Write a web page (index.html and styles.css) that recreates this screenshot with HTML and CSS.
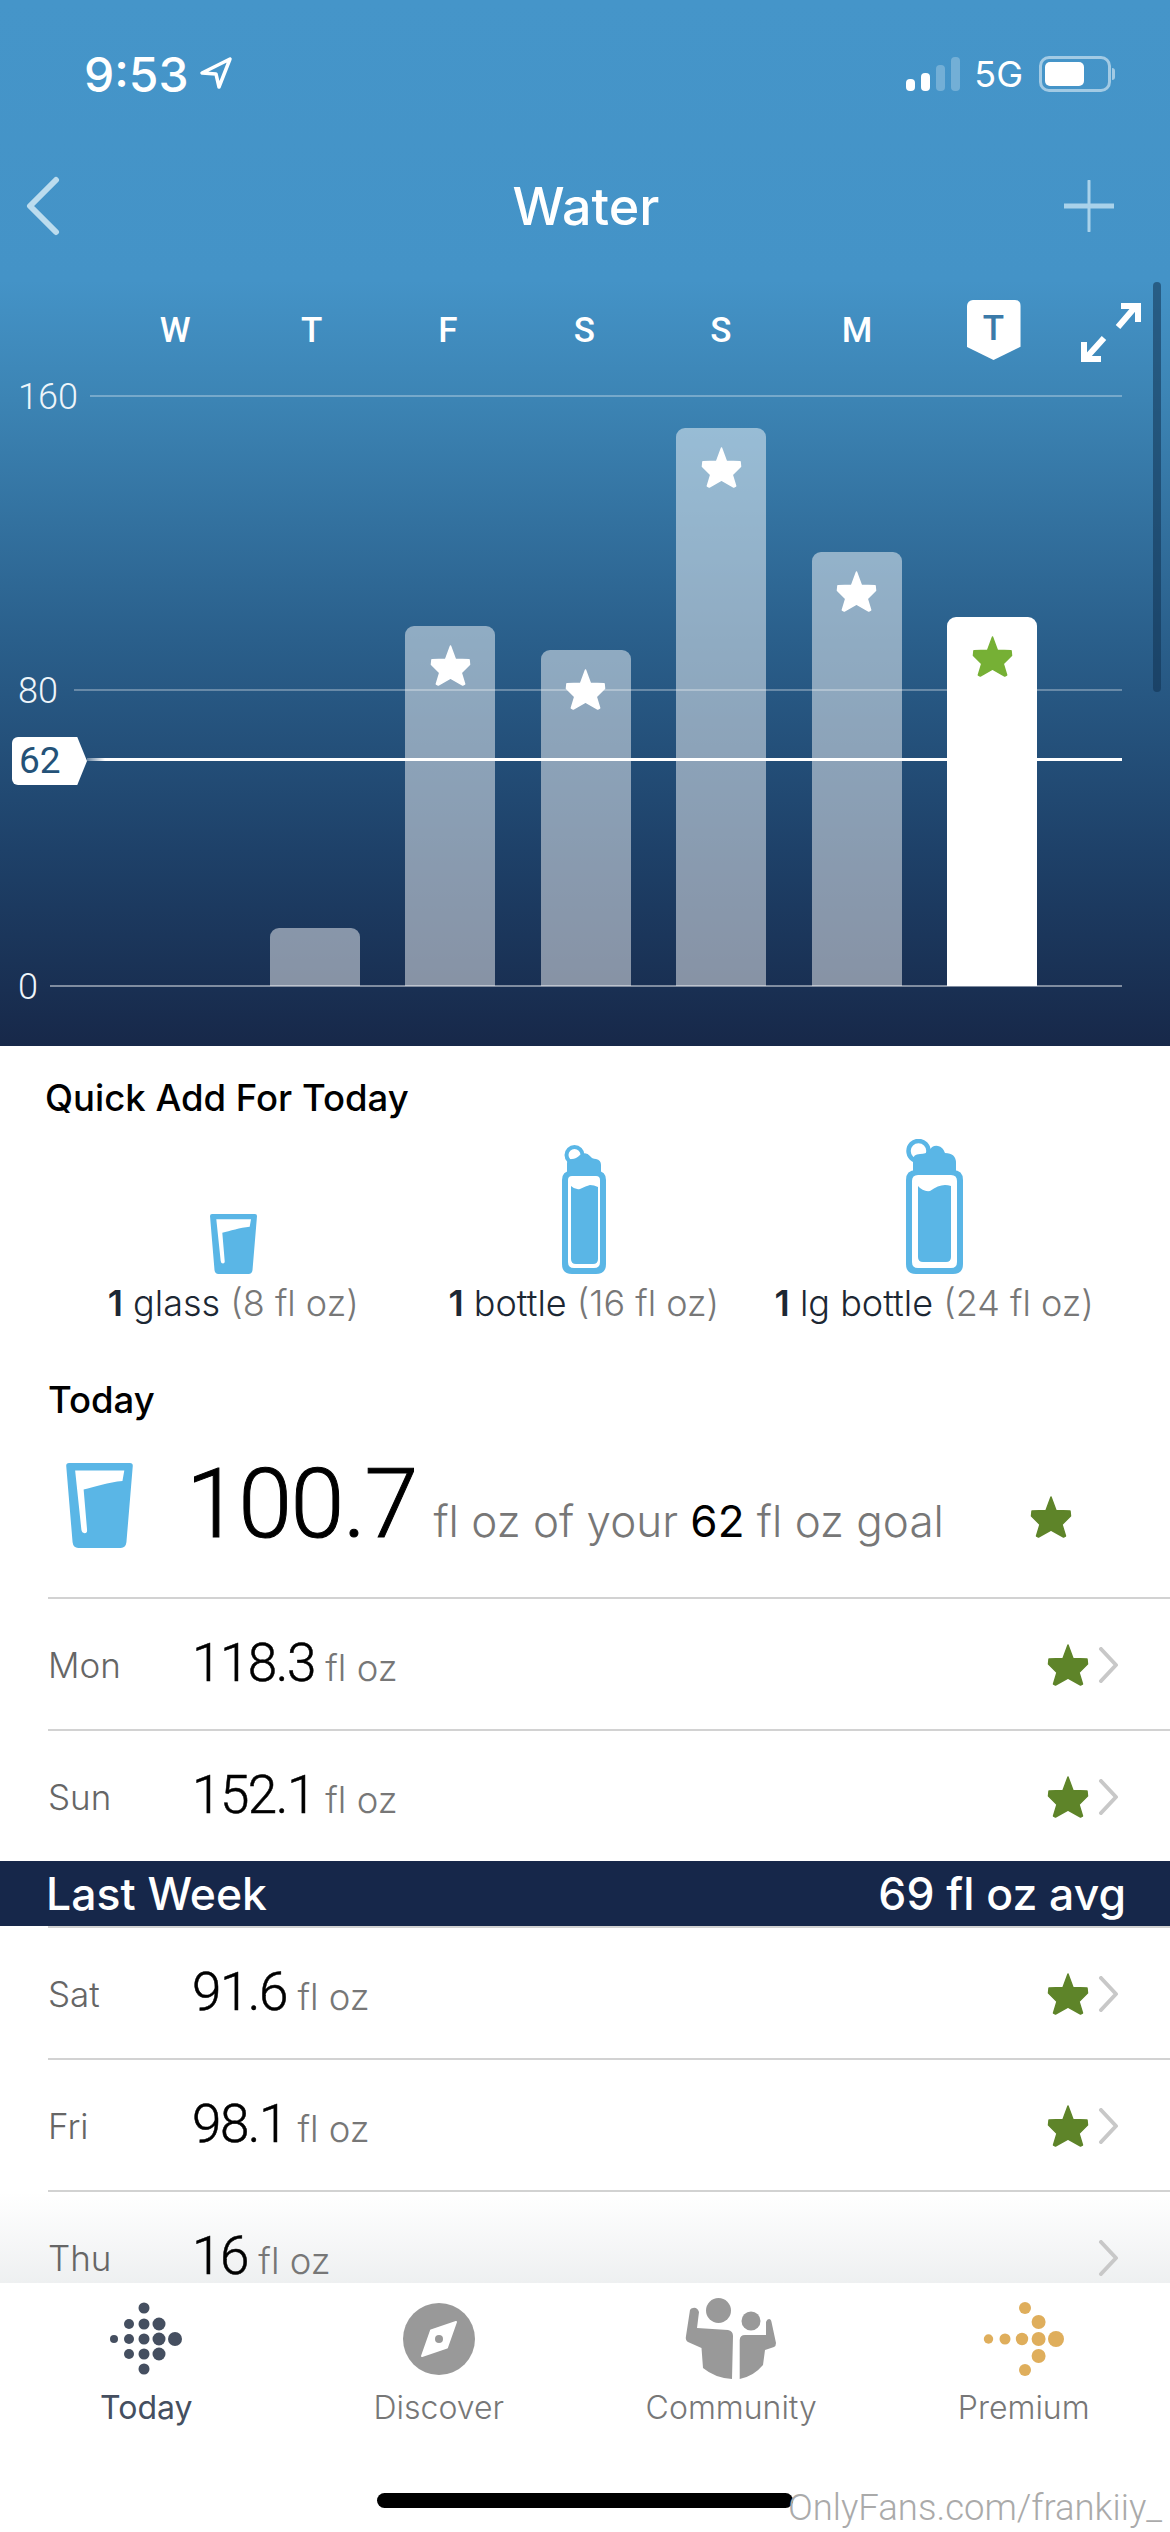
FILE: index.html
```html
<!DOCTYPE html>
<html lang="en">
<head>
  <meta charset="UTF-8">
  <title>Water</title>
  <link rel="stylesheet" href="styles.css">
</head>
<body>
  <svg class="defs" width="0" height="0">
    <symbol id="star" viewBox="0 0 44 44">
      <path d="M22 2 L27 15.5 L41 16 L41.5 21 L33 29.5 L36.5 41 L34.5 42 L22 35 L9.500 42 L7.500 41 L11 29.500 L2.500 21 L3 16 L17 15.500 Z" stroke-linejoin="round" stroke-width="1.500" stroke="currentColor" fill="currentColor"/>
    </symbol>
    <symbol id="chev" viewBox="0 0 21 36">
      <path d="M3 2 L18 18 L3 34" fill="none" stroke="currentColor" stroke-width="4" stroke-linecap="round" stroke-linejoin="round"/>
    </symbol>
    <symbol id="glass" viewBox="0 0 47 60">
      <path fill="#5ab6e6" fill-rule="evenodd" d="M2 0 H45 Q47 0 47 2 L42.500 56 Q42 60 38.500 60 H8.500 Q5 60 4.500 56 L0 2 Q0 0 2 0 Z M6.300 5.300 L10.700 47 Q11 49.500 13 49.500 Q15 49.500 14.700 47 L12.300 18.700 C20 17 30 13.500 39.700 12.700 L41 5.300 Z"/>
    </symbol>
  </svg>

  <div class="screen">
    <section class="hero">
      <div class="status">
        <span class="clock">9:53</span>
        <svg class="loc" width="34" height="34" viewBox="0 0 34 34"><path d="M31 3 L3 17 L17 18 L20 31 Z" fill="none" stroke="#fff" stroke-width="3.500" stroke-linejoin="round"/></svg>
        <div class="signal"><i class="s1"></i><i class="s2"></i><i class="s3"></i><i class="s4"></i></div>
        <span class="net">5G</span>
        <div class="battery"><div class="battery-fill"></div></div>
        <div class="battery-cap"></div>
      </div>

      <div class="nav">
        <svg width="36" height="60" viewBox="0 0 36 60"><path d="M31 4 L5 30 L31 56" fill="none" stroke="#bcdcee" stroke-width="6" stroke-linecap="round" stroke-linejoin="round"/></svg>
        <h1>Water</h1>
        <svg class="nav-plus" width="52" height="52" viewBox="0 0 52 52"><path d="M26 1 V51" stroke="#a9d2ea" stroke-width="3" stroke-linecap="round"/><path d="M1 26 H51" stroke="#a9d2ea" stroke-width="5"/></svg>
      </div>

      <div class="days">
        <div class="day-grid">
          <span>W</span><span>T</span><span>F</span><span>S</span><span>S</span><span>M</span><span class="day-now">T</span>
        </div>
        <svg class="expand" width="60" height="60" viewBox="0 0 60 60">
          <path d="M37 25 L55 4 M40 4 H57 V20 M23 36 L5 56 M3 40 V57 H20" fill="none" stroke="#fff" stroke-width="6"/>
        </svg>
      </div>

      <div class="chart">
        <div class="rule rule-160"><span>160</span></div>
        <div class="rule rule-80"><span>80</span></div>
        <div class="rule rule-0"><span>0</span></div>
        <div class="bars">
          <div class="bar-slot"></div>
          <div class="bar" style="height:58px"></div>
          <div class="bar" style="height:360px"><svg class="star-w" width="43" height="43"><use href="#star"/></svg></div>
          <div class="bar" style="height:336px"><svg class="star-w" width="43" height="43"><use href="#star"/></svg></div>
          <div class="bar" style="height:558px"><svg class="star-w" width="43" height="43"><use href="#star"/></svg></div>
          <div class="bar" style="height:434px"><svg class="star-w" width="43" height="43"><use href="#star"/></svg></div>
          <div class="bar bar-now" style="height:369px"><svg class="star-g" width="43" height="43"><use href="#star"/></svg></div>
        </div>
        <div class="goal-line"></div>
        <div class="goal-tag">62</div>
      </div>
      <div class="scroll-thumb"></div>
    </section>

    <section class="quick">
      <h2>Quick Add For Today</h2>
      <div class="quick-grid">
        <div class="quick-item">
          <svg width="47" height="60"><use href="#glass"/></svg>
          <p><b>1</b> glass <em>(8 fl oz)</em></p>
        </div>
        <div class="quick-item">
          <svg width="44" height="129" viewBox="0 0 44 129">
            <circle cx="12.500" cy="10" r="8" fill="none" stroke="#5ab6e6" stroke-width="4"/>
            <path fill="#5ab6e6" d="M5 28 V18 Q5 14 10 14 Q14 14 18 10 Q24 6 28 11 Q30 14 34 14 Q39 15 39 20 V28 Z"/>
            <path fill="#5ab6e6" fill-rule="evenodd" d="M9 26 H35 Q44 26 44 35 V119 Q44 129 34 129 H10 Q0 129 0 119 V35 Q0 26 9 26 Z M10 31 Q6 31 6 35 V117 Q6 123 12 123 H32 Q38 123 38 117 V35 Q38 31 34 31 Z"/>
            <path fill="#5ab6e6" d="M9 41 Q13 45 18 44 Q24 41 28 40 Q32 40 36 42 V114 Q36 119 31 119 H14 Q9 119 9 114 Z"/>
          </svg>
          <p><b>1</b> bottle <em>(16 fl oz)</em></p>
        </div>
        <div class="quick-item">
          <svg width="57" height="135" viewBox="0 0 57 135">
            <circle cx="12.500" cy="12" r="10" fill="none" stroke="#5ab6e6" stroke-width="4.500"/>
            <path fill="#5ab6e6" d="M7 36 V21 Q7 15 14 15 Q20 15 23 12 Q26 6 32 7 Q37 8 39 14 Q50 14 50 24 V36 Z"/>
            <path fill="#5ab6e6" fill-rule="evenodd" d="M10 31 H47 Q57 31 57 41 V125 Q57 135 47 135 H10 Q0 135 0 125 V41 Q0 31 10 31 Z M12 36 Q6 36 6 42 V123 Q6 129 12 129 H45 Q51 129 51 123 V42 Q51 36 45 36 Z"/>
            <path fill="#5ab6e6" d="M12 47 Q17 53 24 52 Q32 46 39 46 Q42 46 45 47 V118 Q45 123 40 123 H17 Q12 123 12 118 Z"/>
          </svg>
          <p><b>1</b> lg bottle <em>(24 fl oz)</em></p>
        </div>
      </div>
    </section>

    <section class="today">
      <h2>Today</h2>
      <div class="today-line">
        <svg class="today-glass" width="67" height="85"><use href="#glass"/></svg>
        <div class="today-text"><span class="big">100.7</span> <span class="goal-text">fl oz of your <b>62</b> fl oz goal</span></div>
        <svg class="star-d today-star" width="44" height="44"><use href="#star"/></svg>
      </div>
    </section>

    <div class="list">
      <div class="row"><span class="row-day">Mon</span><div class="row-val"><span>118.3</span> <small>fl oz</small></div><svg class="star-d" width="44" height="44"><use href="#star"/></svg><svg class="chev" width="21" height="36"><use href="#chev"/></svg></div>
      <div class="row"><span class="row-day">Sun</span><div class="row-val"><span>152.1</span> <small>fl oz</small></div><svg class="star-d" width="44" height="44"><use href="#star"/></svg><svg class="chev" width="21" height="36"><use href="#chev"/></svg></div>
      <div class="week-bar"><span>Last Week</span><span>69 fl oz avg</span></div>
      <div class="row"><span class="row-day">Sat</span><div class="row-val"><span>91.6</span> <small>fl oz</small></div><svg class="star-d" width="44" height="44"><use href="#star"/></svg><svg class="chev" width="21" height="36"><use href="#chev"/></svg></div>
      <div class="row"><span class="row-day">Fri</span><div class="row-val"><span>98.1</span> <small>fl oz</small></div><svg class="star-d" width="44" height="44"><use href="#star"/></svg><svg class="chev" width="21" height="36"><use href="#chev"/></svg></div>
      <div class="row"><span class="row-day">Thu</span><div class="row-val"><span>16</span> <small>fl oz</small></div><span></span><svg class="chev" width="21" height="36"><use href="#chev"/></svg></div>
      <div class="list-fade"></div>
    </div>

    <nav class="tabs">
      <div class="tab tab-on">
        <svg width="74" height="82" viewBox="0 0 74 82" fill="#454f60">
          <circle cx="35" cy="10" r="5.500"/>
          <circle cx="20" cy="26" r="5"/><circle cx="35" cy="26" r="5.500"/><circle cx="50" cy="26" r="6.500"/>
          <circle cx="5" cy="41" r="4"/><circle cx="20" cy="41" r="5"/><circle cx="35" cy="41" r="5.500"/><circle cx="50" cy="41" r="6.500"/><circle cx="66" cy="41" r="7"/>
          <circle cx="20" cy="56" r="5"/><circle cx="35" cy="56" r="5.500"/><circle cx="50" cy="56" r="6.500"/>
          <circle cx="35" cy="71" r="5.500"/>
        </svg>
        <span>Today</span>
      </div>
      <div class="tab">
        <svg width="72" height="82" viewBox="-36 -41 72 82">
          <circle r="36" fill="#999"/>
          <path d="M17 -17 L-8 -8.500 L-17 17 L8 8.500 Z" fill="#fff" stroke="#fff" stroke-width="2" stroke-linejoin="round"/>
          <circle r="4" fill="#999"/>
        </svg>
        <span>Discover</span>
      </div>
      <div class="tab">
        <svg width="92" height="82" viewBox="686 2298 92 82" fill="#999">
          <circle cx="719.500" cy="2310.500" r="12.500"/>
          <circle cx="752" cy="2321" r="9.500"/>
          <path d="M694 2308 Q698 2307 700 2312 L698 2328 L729 2330 Q734 2331 734 2336 L733 2379 Q716 2378 704 2368 L702.500 2348 L689 2342 Q686 2340 687 2336 L691 2310 Q692 2308 694 2308 Z"/>
          <path d="M740.700 2379 V2340 Q741 2335 746 2335 L767 2335 L767 2322 Q768 2319 770 2319 Q772 2319 772.500 2322 L777 2343 Q777 2346 775 2347 L766 2350 L764 2365 Q755 2376 740.700 2379 Z"/>
        </svg>
        <span>Community</span>
      </div>
      <div class="tab">
        <svg width="84" height="82" viewBox="0 0 84 82" fill="#dfae5c">
          <circle cx="6.500" cy="41" r="4.700"/><circle cx="23" cy="41" r="5.500"/><circle cx="40" cy="41" r="6.200"/><circle cx="56.600" cy="41" r="7"/><circle cx="74" cy="41" r="8"/>
          <circle cx="43" cy="10" r="6"/><circle cx="56.600" cy="24" r="7"/><circle cx="56.600" cy="58" r="7"/><circle cx="43" cy="72" r="6"/>
        </svg>
        <span>Premium</span>
      </div>
    </nav>

    <div class="home-bar"></div>
    <div class="watermark">OnlyFans.com/frankiiy_</div>
  </div>
</body>
</html>
```

FILE: styles.css
```css
/* Page */
body {
  margin: 0;
  background: #fff;
  font-family: Inter, "Liberation Sans", sans-serif;
  color: #000;
}

h1, h2, p {
  margin: 0;
}

.defs {
  position: absolute;
}

.screen {
  position: relative;
  width: 1170px;
  height: 2532px;
  overflow: hidden;
  display: flex;
  flex-direction: column;
}

/* Blue header with chart */
.hero {
  position: relative;
  height: 1046px;
  flex: none;
  color: #fff;
  background: linear-gradient(180deg, #4595c9 0, #4493c7 280px, #3c84b4 400px, #2a5f8b 640px, #1e4169 850px, #172849 1046px);
}

.status {
  height: 148px;
  box-sizing: border-box;
  padding: 0 55px 0 84px;
  display: flex;
  align-items: center;
}

.clock {
  font-size: 48px;
  font-weight: 500;
}

.loc {
  margin-left: 10px;
  margin-top: -2px;
}

.signal {
  margin-left: auto;
  display: flex;
  align-items: flex-end;
  gap: 6px;
  height: 34px;
}

.signal i {
  display: block;
  width: 9px;
  border-radius: 4px;
  background: #fff;
}

.s1 { height: 12px; }
.s2 { height: 18px; }
.s3 { height: 26px; background: rgba(255, 255, 255, 0.25) !important; }
.s4 { height: 34px; background: rgba(255, 255, 255, 0.25) !important; }

.net {
  margin-left: 14px;
  font-size: 36px;
}

.battery {
  margin-left: 16px;
  width: 72px;
  height: 36px;
  box-sizing: border-box;
  border: 3px solid rgba(255, 255, 255, 0.5);
  border-radius: 10px;
  padding: 3px;
}

.battery-fill {
  width: 39px;
  height: 100%;
  background: #fff;
  border-radius: 5px;
}

.battery-cap {
  width: 3px;
  height: 12px;
  margin-left: 1px;
  border-radius: 0 3px 3px 0;
  background: rgba(255, 255, 255, 0.5);
}

.nav {
  height: 116px;
  box-sizing: border-box;
  padding: 0 55px 0 25px;
  display: grid;
  grid-template-columns: 1fr auto 1fr;
  align-items: center;
}

.nav h1 {
  font-size: 52px;
  font-weight: 500;
  margin-left: 32px;
}

.nav-plus {
  justify-self: end;
}

.days {
  height: 132px;
  padding-left: 107px;
  display: flex;
  align-items: center;
}

.day-grid {
  display: grid;
  grid-template-columns: repeat(7, 136.4px);
  justify-items: center;
  align-items: center;
  font-family: Roboto, sans-serif;
  font-size: 35px;
  font-weight: 500;
}

.day-now {
  width: 54px;
  height: 60px;
  box-sizing: border-box;
  padding-bottom: 4px;
  display: flex;
  align-items: center;
  justify-content: center;
  background: #fff;
  color: #3b7aa9;
  border-radius: 6px 6px 0 0;
  clip-path: polygon(0 0, 100% 0, 100% 78%, 50% 100%, 0 78%);
}

.expand {
  margin-left: 19px;
  margin-top: 4px;
}

.chart {
  position: relative;
  height: 590px;
}

.rule {
  position: absolute;
  right: 48px;
  height: 2px;
  background: rgba(255, 255, 255, 0.3);
}

.rule span {
  position: absolute;
  top: -20px;
  font-family: Roboto, sans-serif;
  font-size: 36px;
  font-weight: 300;
  line-height: 44px;
  color: #eef5fa;
}

.rule-160 { top: -1px; left: 90px; }
.rule-160 span { left: -72px; }
.rule-80 { top: 293px; left: 74px; }
.rule-80 span { left: -56px; }
.rule-0 { top: 589px; left: 50px; background: rgba(255, 255, 255, 0.45); }
.rule-0 span { left: -32px; }

.bars {
  position: absolute;
  left: 112px;
  bottom: 0;
  display: grid;
  grid-template-columns: repeat(7, 135.4px);
  justify-items: center;
  align-items: end;
}

.bar {
  width: 90px;
  box-sizing: border-box;
  padding-top: 18px;
  display: flex;
  justify-content: center;
  align-items: flex-start;
  border-radius: 9px 9px 0 0;
  background: rgba(255, 255, 255, 0.48);
}

.bar-now {
  background: #fff;
}

.star-w { color: #fff; }
.star-g { color: #76b035; }
.star-d { color: #5e8429; }

.goal-line {
  position: absolute;
  left: 87px;
  right: 48px;
  top: 362px;
  height: 3px;
  background: linear-gradient(90deg, rgba(255, 255, 255, 0.3), #fff 18px);
}

.goal-tag {
  position: absolute;
  left: 12px;
  top: 341px;
  width: 75px;
  height: 48px;
  box-sizing: border-box;
  padding-left: 7px;
  font-family: Roboto, sans-serif;
  font-size: 37px;
  line-height: 48px;
  color: #245278;
  background: #fff;
  border-radius: 6px 0 0 6px;
  clip-path: polygon(0 0, 87% 0, 100% 50%, 87% 100%, 0 100%);
}

.scroll-thumb {
  position: absolute;
  left: 1153px;
  top: 282px;
  width: 8px;
  height: 410px;
  border-radius: 4px;
  background: rgba(16, 50, 80, 0.55);
}

/* Quick add */
.quick {
  height: 324px;
  flex: none;
  box-sizing: border-box;
  padding-top: 31px;
}

h2 {
  font-size: 36.500px;
  font-weight: 500;
  line-height: 42px;
}

.quick h2 {
  padding-left: 45px;
}

.quick-grid {
  margin-top: 20px;
  padding-left: 58px;
  height: 135px;
  display: grid;
  grid-template-columns: repeat(3, 350.5px);
}

.quick-item {
  height: 135px;
  display: flex;
  flex-direction: column;
  align-items: center;
  justify-content: flex-end;
  position: relative;
}

.quick-item svg {
  display: block;
}

.quick-item p {
  position: absolute;
  top: 142px;
  white-space: nowrap;
  font-size: 36px;
  font-weight: 300;
  line-height: 44px;
  color: #1c2733;
}

.quick-item b {
  font-weight: 600;
}

.quick-item em {
  font-style: normal;
  color: #777;
}

/* Today summary */
.today {
  height: 227px;
  flex: none;
  box-sizing: border-box;
  padding-top: 9px;
}

.today h2 {
  padding-left: 48px;
}

.today-line {
  margin-top: 42px;
  position: relative;
  display: flex;
  align-items: flex-start;
  padding-left: 66px;
}

.today-glass {
  flex: none;
}

.today-text {
  margin-left: 53px;
  margin-top: -2px;
  white-space: nowrap;
}

.big {
  font-family: Roboto, sans-serif;
  font-size: 97px;
  font-weight: 300;
  letter-spacing: -1.500px;
  line-height: 86px;
  -webkit-text-stroke: 1px #000;
}

.goal-text {
  margin-left: 12px;
  font-size: 44px;
  font-weight: 300;
  color: #777;
}

.goal-text b {
  font-weight: 400;
  color: #000;
}

.today-star {
  position: absolute;
  left: 1029px;
  top: 32px;
}

/* History list */
.list {
  position: relative;
  flex: 1;
  min-height: 0;
}

.row {
  position: relative;
  z-index: 1;
  margin-left: 48px;
  height: 132px;
  box-sizing: border-box;
  padding: 2px 51px 0 0;
  display: grid;
  grid-template-columns: 144px 1fr 44px 29px;
  align-items: center;
  border-top: 2px solid #d2d2d2;
}

.row-day {
  font-size: 35px;
  font-weight: 300;
  color: #666;
}

.row-val {
  margin-top: 8px;
  line-height: 50px;
}

.row-val span {
  font-family: Roboto, sans-serif;
  font-size: 53px;
  font-weight: 300;
  letter-spacing: -1.500px;
  -webkit-text-stroke: 0.5px #000;
}

.row-val small {
  margin-left: 6px;
  font-size: 36.500px;
  font-weight: 300;
  color: #777;
}

.chev {
  justify-self: end;
  color: #c8c8c8;
}

.week-bar {
  position: relative;
  z-index: 1;
  height: 65px;
  box-sizing: border-box;
  padding: 0 44px 0 46px;
  display: flex;
  align-items: center;
  justify-content: space-between;
  background: #16274a;
  color: #fff;
  font-size: 44.500px;
  font-weight: 500;
}

.list-fade {
  position: absolute;
  left: 0;
  right: 0;
  bottom: 0;
  height: 90px;
  background: linear-gradient(180deg, rgba(238, 240, 241, 0), #eef0f1);
}

/* Tab bar */
.tabs {
  position: relative;
  z-index: 2;
  height: 249px;
  flex: none;
  box-sizing: border-box;
  padding-top: 15px;
  display: grid;
  grid-template-columns: repeat(4, 1fr);
  background: #fff;
}

.tab {
  display: flex;
  flex-direction: column;
  align-items: center;
  font-size: 32px;
  font-weight: 300;
  color: #777;
}

.tab span {
  margin-top: 8px;
  line-height: 40px;
}

.tab-on {
  color: #454f60;
  font-weight: 400;
}

.home-bar {
  position: absolute;
  z-index: 3;
  left: 377px;
  top: 2493px;
  width: 416px;
  height: 15px;
  border-radius: 8px;
  background: #000;
}

.watermark {
  position: absolute;
  z-index: 3;
  left: 788px;
  top: 2484px;
  font-family: Roboto, sans-serif;
  font-size: 36.500px;
  font-weight: 300;
  line-height: 48px;
  color: #aaa;
  white-space: nowrap;
}
```
